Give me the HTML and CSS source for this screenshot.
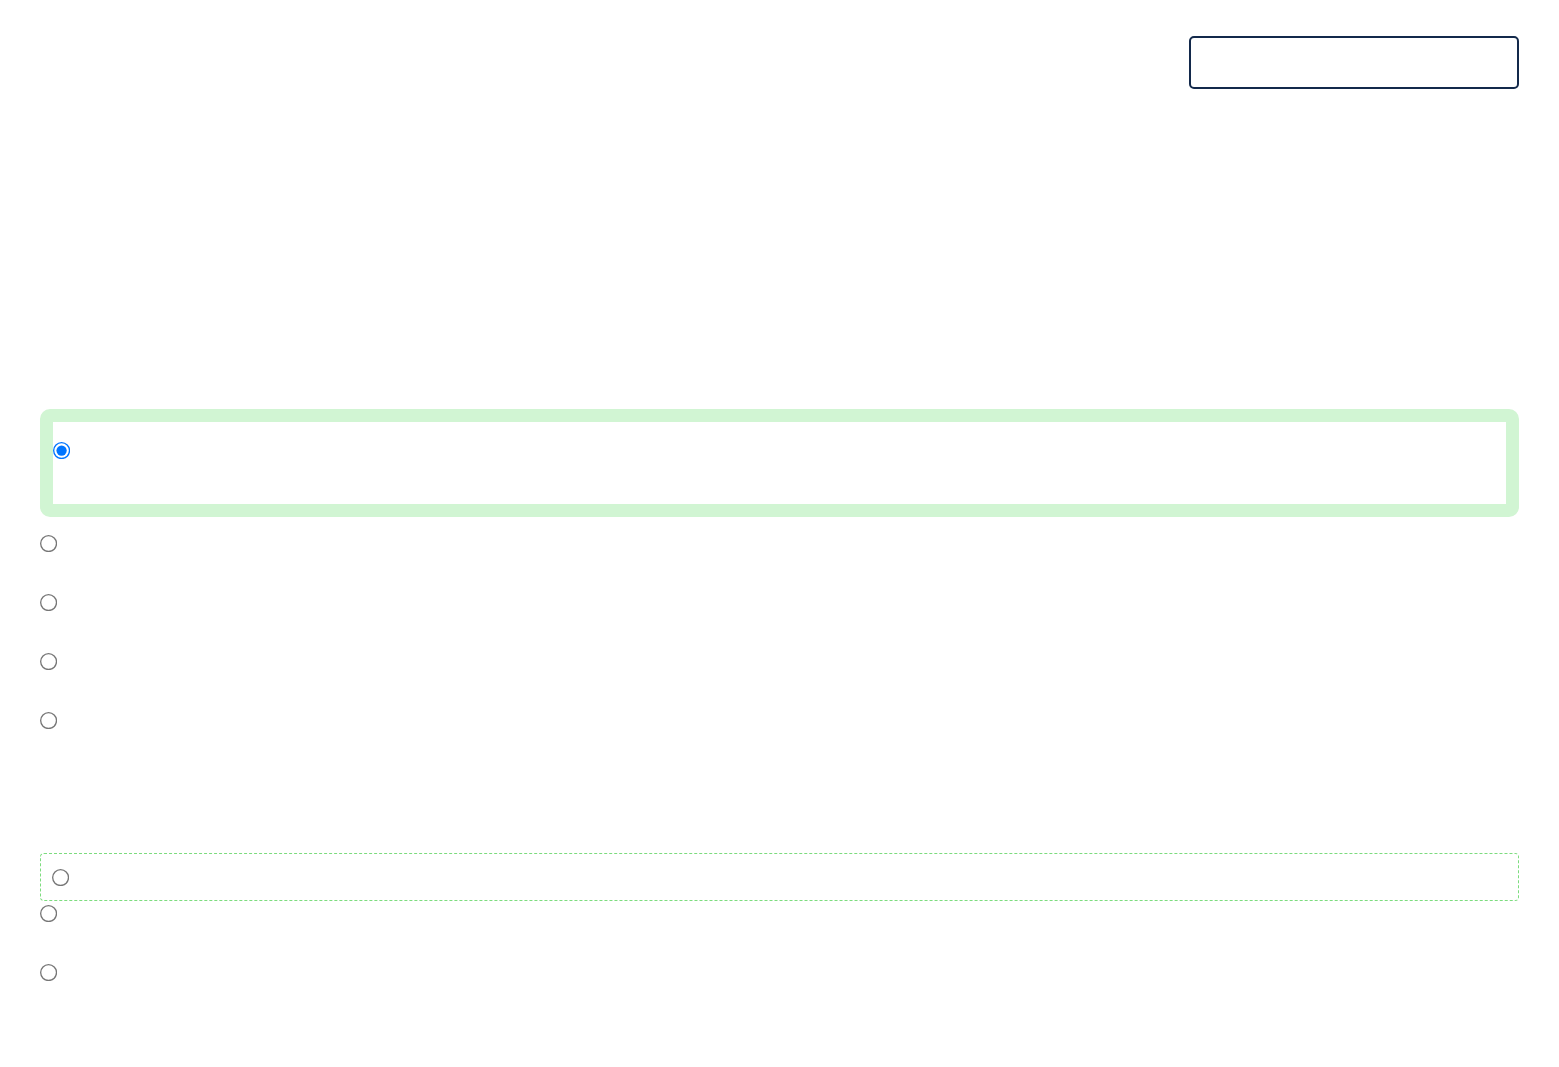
FILE: index.html
```html
<!DOCTYPE html>
<html>
	<head>
		<meta charset="utf-8">
		<title></title>
		<link rel="stylesheet" href="styles.css">
	</head>
	<body>
		<div class="toolbar">
			<div class="searchBox"></div>
		</div>
		<div class="groupOne">
			<div class="selectedCard">
				<input type="radio" name="plan" checked>
			</div>
			<ul class="radioList">
				<li><input type="radio" name="plan"></li>
				<li><input type="radio" name="plan"></li>
				<li><input type="radio" name="plan"></li>
				<li><input type="radio" name="plan"></li>
			</ul>
		</div>
		<div class="groupTwo">
			<div class="dropCard">
				<input type="radio" name="other">
			</div>
			<ul class="radioList tight">
				<li><input type="radio" name="other"></li>
				<li><input type="radio" name="other"></li>
			</ul>
		</div>
	</body>
</html>
```

FILE: styles.css
```css
body {
	margin: 0px;
	padding: 0px 40px;
	font-family: "Liberation Sans", Arial, sans-serif;
	background-color: #fff;
}
input[type="radio"] {
	display: block;
	width: 13px;
	height: 13px;
	margin: 0px 4px 4px 0px;
	transform: scale(1.32);
	transform-origin: 0 0;
}
.toolbar {
	display: flex;
	justify-content: flex-end;
	padding-top: 36px;
}
.searchBox {
	box-sizing: border-box;
	width: 330px;
	height: 53px;
	border: solid 2px #13294b;
	border-radius: 5px;
}
.groupOne {
	margin-top: 320px;
}
.selectedCard {
	box-sizing: border-box;
	height: 108px;
	border: solid 13px #d1f5d3;
	border-radius: 10px;
	padding: 20px 0px 0px 0px;
}
.radioList {
	list-style: none;
	margin: 0px;
	padding: 0px;
	display: flex;
	flex-direction: column;
	gap: 42px;
	padding-top: 18px;
}
.radioList li {
	height: 17px;
}
.groupTwo {
	margin-top: 124px;
}
.dropCard {
	box-sizing: border-box;
	height: 48px;
	border: dashed 1px #7cdc7e;
	border-radius: 4px;
	padding: 15px 11px;
}
.radioList.tight {
	padding-top: 4px;
}
```
